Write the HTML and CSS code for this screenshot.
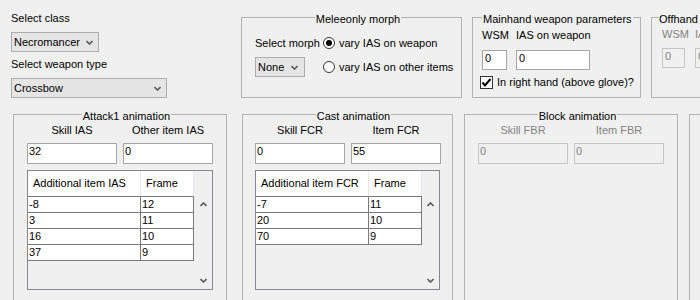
FILE: index.html
```html
<!DOCTYPE html>
<html>
<head>
    <title>Breakpoint calculator</title>
    <meta charset="UTF-8">
    <link rel="stylesheet" href="styles.css">
</head>
<body>
    <div class="window">
        <div class="row top-row">
            <div class="pick">
                <div class="pick-label">Select class</div>
                <div class="combo combo-class">Necromancer
                    <svg class="chevron" width="7" height="5" viewBox="0 0 7 5"><path d="M0.5 1 L3.5 4 L6.5 1" /></svg>
                </div>
                <div class="pick-label second">Select weapon type</div>
                <div class="combo combo-weapon">Crossbow
                    <svg class="chevron" width="7" height="5" viewBox="0 0 7 5"><path d="M0.5 1 L3.5 4 L6.5 1" /></svg>
                </div>
            </div>

            <fieldset class="group melee">
                <legend class="centered">Meleeonly morph</legend>
                <div class="morph-grid">
                    <span>Select morph</span>
                    <span class="radio-line"><span class="radio checked"></span>vary IAS on weapon</span>
                    <div class="combo combo-morph">None
                        <svg class="chevron" width="7" height="5" viewBox="0 0 7 5"><path d="M0.5 1 L3.5 4 L6.5 1" /></svg>
                    </div>
                    <span class="radio-line"><span class="radio"></span>vary IAS on other items</span>
                </div>
            </fieldset>

            <fieldset class="group mainhand">
                <legend>Mainhand weapon parameters</legend>
                <div class="param-grid">
                    <span>WSM</span>
                    <span>IAS on weapon</span>
                    <div class="field">0</div>
                    <div class="field">0</div>
                </div>
                <div class="check-line">
                    <span class="checkbox">
                        <svg width="11" height="11" viewBox="0 0 11 11"><path d="M1.5 5.5 L4 8.5 L9.5 2" /></svg>
                    </span>
                    In right hand (above glove)?
                </div>
            </fieldset>

            <fieldset class="group offhand">
                <legend>Offhand weapon parameters</legend>
                <div class="param-grid off-grid">
                    <span class="muted">WSM</span>
                    <span class="muted">IAS on weapon</span>
                    <div class="field disabled">0</div>
                    <div class="field disabled">0</div>
                </div>
            </fieldset>
        </div>

        <div class="row bottom-row">
            <fieldset class="group anim">
                <legend class="centered">Attack1 animation</legend>
                <div class="anim-grid">
                    <span>Skill IAS</span>
                    <span>Other item IAS</span>
                    <div class="field tall">32</div>
                    <div class="field tall">0</div>
                </div>
                <div class="list">
                    <div class="list-cols">
                        <div class="list-head">
                            <div class="hcell col-a">Additional item IAS</div>
                            <div class="hcell col-b">Frame</div>
                        </div>
                        <div class="list-body">
                            <div class="lrow"><div class="cell col-a">-8</div><div class="cell col-b">12</div></div>
                            <div class="lrow"><div class="cell col-a">3</div><div class="cell col-b">11</div></div>
                            <div class="lrow"><div class="cell col-a">16</div><div class="cell col-b">10</div></div>
                            <div class="lrow"><div class="cell col-a">37</div><div class="cell col-b">9</div></div>
                        </div>
                    </div>
                    <div class="scrollbar">
                        <div class="sbtn"><svg width="7" height="5" viewBox="0 0 7 5"><path d="M0.5 4 L3.5 1 L6.5 4" /></svg></div>
                        <div class="sbtn"><svg width="7" height="5" viewBox="0 0 7 5"><path d="M0.5 1 L3.5 4 L6.5 1" /></svg></div>
                    </div>
                </div>
            </fieldset>

            <fieldset class="group anim cast">
                <legend class="centered">Cast animation</legend>
                <div class="anim-grid">
                    <span>Skill FCR</span>
                    <span>Item FCR</span>
                    <div class="field tall">0</div>
                    <div class="field tall">55</div>
                </div>
                <div class="list">
                    <div class="list-cols">
                        <div class="list-head">
                            <div class="hcell col-a">Additional item FCR</div>
                            <div class="hcell col-b">Frame</div>
                        </div>
                        <div class="list-body">
                            <div class="lrow"><div class="cell col-a">-7</div><div class="cell col-b">11</div></div>
                            <div class="lrow"><div class="cell col-a">20</div><div class="cell col-b">10</div></div>
                            <div class="lrow"><div class="cell col-a">70</div><div class="cell col-b">9</div></div>
                        </div>
                    </div>
                    <div class="scrollbar">
                        <div class="sbtn"><svg width="7" height="5" viewBox="0 0 7 5"><path d="M0.5 4 L3.5 1 L6.5 4" /></svg></div>
                        <div class="sbtn"><svg width="7" height="5" viewBox="0 0 7 5"><path d="M0.5 1 L3.5 4 L6.5 1" /></svg></div>
                    </div>
                </div>
            </fieldset>

            <fieldset class="group anim block">
                <legend class="centered">Block animation</legend>
                <div class="anim-grid">
                    <span class="muted">Skill FBR</span>
                    <span class="muted">Item FBR</span>
                    <div class="field tall disabled">0</div>
                    <div class="field tall disabled">0</div>
                </div>
            </fieldset>

            <fieldset class="group anim next">
                <legend class="centered">Hit recovery animation</legend>
            </fieldset>
        </div>
    </div>
</body>
</html>
```

FILE: styles.css
```css
* {
    box-sizing: border-box;
    margin: 0;
    padding: 0;
}

body {
    font-family: "Liberation Sans", Arial, sans-serif;
    font-size: 11px;
    color: #000;
    background-color: #f0f0f0;
    width: 700px;
    height: 300px;
    overflow: hidden;
    white-space: nowrap;
}

.window {
    padding-top: 9px;
}

.row {
    display: flex;
    align-items: flex-start;
}

.row > * {
    flex-shrink: 0;
}

.top-row {
    padding-left: 11px;
}

.bottom-row {
    padding-left: 13px;
    margin-top: 8px;
}

/* left column with the two combos */
.pick {
    width: 230px;
}

.pick-label {
    line-height: 13px;
    margin-top: 3px;
    margin-bottom: 7px;
}

.pick-label.second {
    margin-top: 6px;
}

.combo {
    display: flex;
    align-items: center;
    justify-content: space-between;
    height: 20px;
    line-height: 18px;
    padding: 0 5px 0 2px;
    border: 1px solid #adadad;
    background-color: #e5e5e5;
}

.combo-class {
    width: 88px;
}

.combo-weapon {
    width: 156px;
}

.combo-morph {
    width: 50px;
    padding-right: 6px;
}

.chevron path,
.sbtn path {
    fill: none;
    stroke: #5a5a5a;
    stroke-width: 1.6;
}

/* group boxes */
.group {
    border: 1px solid #b2b2b2;
    min-width: 0;
}

.group legend {
    padding: 4px 1px 0;
    line-height: 12px;
}

.group legend.centered {
    margin: 0 auto;
}

.melee {
    width: 221px;
    height: 89px;
    padding: 11px 0 0 13px;
}

.morph-grid {
    display: grid;
    grid-template-columns: 68px auto;
    grid-template-rows: 14px 20px;
    row-gap: 7px;
    align-items: center;
    line-height: 14px;
}

.radio-line {
    display: flex;
    align-items: center;
    gap: 4px;
}

.radio {
    display: flex;
    align-items: center;
    justify-content: center;
    width: 12px;
    height: 12px;
    border: 1px solid #333;
    border-radius: 50%;
    background: #fff;
}

.radio.checked::after {
    content: "";
    width: 6px;
    height: 6px;
    border-radius: 50%;
    background: #000;
}

.mainhand {
    width: 169px;
    height: 89px;
    margin-left: 10px;
    padding: 4px 0 0 9px;
}

.offhand {
    width: 200px;
    height: 89px;
    margin-left: 10px;
    padding: 3px 0 0 10px;
}

.offhand legend {
    margin-left: -4px;
}

.param-grid {
    display: grid;
    grid-template-columns: 25px 74px;
    column-gap: 9px;
    row-gap: 8px;
    line-height: 13px;
}

.param-grid.off-grid {
    grid-template-columns: 23px 74px;
    column-gap: 10px;
    row-gap: 7px;
}

.field {
    height: 20px;
    line-height: 12px;
    padding: 1px 0 0 2px;
    border: 1px solid #a5a5a5;
    background-color: #fff;
    overflow: hidden;
}

.field.tall {
    height: 21px;
    padding-left: 1px;
}

.field.disabled {
    background-color: #f0f0f0;
    border-color: #c6c6c6;
    color: #838383;
}

.muted {
    color: #838383;
}

.check-line {
    display: flex;
    align-items: center;
    gap: 4px;
    margin: 5px 0 0 -2px;
    line-height: 14px;
}

.checkbox {
    display: flex;
    align-items: center;
    justify-content: center;
    width: 13px;
    height: 13px;
    border: 1px solid #333;
    background: #fff;
}

.checkbox path {
    fill: none;
    stroke: #000;
    stroke-width: 2;
}

/* animation groups */
.anim {
    width: 214px;
    height: 200px;
    padding: 2px 0 0 13px;
}

.anim.cast {
    width: 211px;
    margin-left: 15px;
    padding-left: 12px;
}

.anim.block {
    margin-left: 11px;
}

.anim.next {
    margin-left: 11px;
}

.anim-grid {
    display: grid;
    grid-template-columns: 90px 90px;
    column-gap: 6px;
    row-gap: 6px;
    line-height: 13px;
    text-align: center;
}

.anim-grid .field {
    text-align: left;
}

.list {
    display: flex;
    width: 186px;
    height: 120px;
    margin-top: 6px;
    border: 1px solid #828790;
    background-color: #f0f0f0;
}

.cast .list {
    width: 185px;
}

.list-cols {
    width: 166px;
}

.list-head {
    display: flex;
    height: 25px;
    background-color: #fff;
}

.hcell {
    line-height: 25px;
    padding-left: 5px;
    border-right: 1px solid #e3e8ef;
}

.col-a {
    width: 113px;
}

.col-b {
    width: 53px;
}

.list-body {
    border-top: 1px solid #7a7a7a;
}

.lrow {
    display: flex;
}

.cell {
    line-height: 15px;
    padding-left: 1px;
    background-color: #fff;
    border-right: 1px solid #7a7a7a;
    border-bottom: 1px solid #7a7a7a;
}

.scrollbar {
    flex: 1;
    display: flex;
    flex-direction: column;
    justify-content: space-between;
    padding-top: 25px;
}

.sbtn {
    display: flex;
    align-items: center;
    justify-content: center;
    height: 17px;
}
```
